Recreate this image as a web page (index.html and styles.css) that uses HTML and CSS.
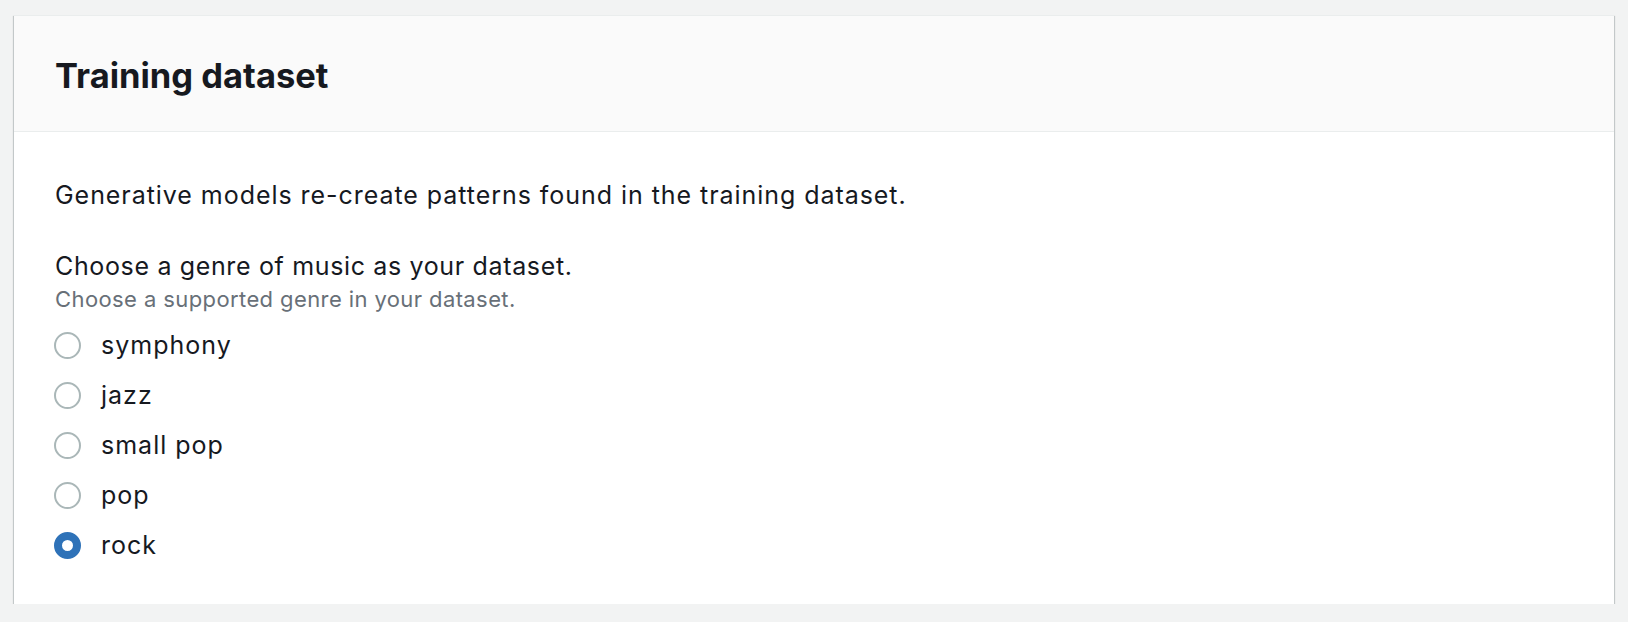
FILE: index.html
```html
<!DOCTYPE html>
<html lang="en">
<head>
<meta charset="utf-8">
<title>Training dataset</title>
<link rel="stylesheet" href="styles.css">
</head>
<body>
<section class="container">
  <header class="container-header">
    <h2 class="title">Training dataset</h2>
  </header>
  <div class="container-body">
    <p class="intro">Generative models re-create patterns found in the training dataset.</p>
    <div class="field">
      <div class="label">Choose a genre of music as your dataset.</div>
      <div class="description">Choose a supported genre in your dataset.</div>
      <div class="radio-group">
        <label class="radio"><span class="radio-control"></span><span class="radio-label">symphony</span></label>
        <label class="radio"><span class="radio-control"></span><span class="radio-label">jazz</span></label>
        <label class="radio"><span class="radio-control"></span><span class="radio-label">small pop</span></label>
        <label class="radio"><span class="radio-control"></span><span class="radio-label">pop</span></label>
        <label class="radio"><span class="radio-control checked"></span><span class="radio-label">rock</span></label>
      </div>
    </div>
  </div>
</section>
</body>
</html>
```
FILE: styles.css
```css
html, body {
  margin: 0;
  padding: 0;
}
body {
  background: #f2f3f3;
  font-family: "Inter", "Open Sans", sans-serif;
  color: #16191f;
  padding: 15px 14px 0 14px;
}
.container {
  width: 1600px;
  background: #ffffff;
  border-top: 1px solid #eaeded;
  box-sizing: border-box;
  box-shadow: 0 1px 1px 0 rgba(0, 28, 36, 0.3), 1px 1px 1px 0 rgba(0, 28, 36, 0.15), -1px 1px 1px 0 rgba(0, 28, 36, 0.15);
}
.container-header {
  background: #fafafa;
  border-bottom: 1px solid #eaeded;
  padding: 38px 41px 33px 41px;
}
.title {
  margin: 0;
  font-size: 34.5px;
  line-height: 44px;
  font-weight: 700;
  color: #16191f;
}
.container-body {
  padding: 45px 41px 34px 41px;
}
.intro {
  margin: 0 0 35px 0;
  font-size: 25px;
  line-height: 36px;
  letter-spacing: 0.95px;
}
.label {
  font-size: 25px;
  line-height: 36px;
  letter-spacing: 0.65px;
}
.description {
  font-size: 22px;
  line-height: 30px;
  color: #687078;
  letter-spacing: 0.4px;
}
.radio-group {
  display: flex;
  flex-direction: column;
  margin-top: 6px;
}
.radio {
  display: flex;
  align-items: center;
  height: 50px;
}
.radio-control {
  width: 27px;
  height: 27px;
  box-sizing: border-box;
  border-radius: 50%;
  border: 2.5px solid #aab7b8;
  background: #ffffff;
  margin-left: -1px;
  flex: none;
}
.radio-control.checked {
  border: 8.5px solid #2e72b8;
}
.radio-label {
  margin-left: 20px;
  font-size: 25px;
  line-height: 36px;
  letter-spacing: 1px;
}
```
